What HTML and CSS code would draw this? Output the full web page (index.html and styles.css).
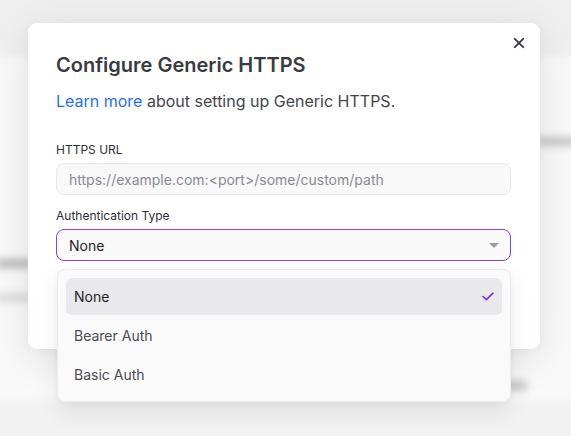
FILE: index.html
```html
<!DOCTYPE html>
<html lang="en">
<head>
<meta charset="utf-8">
<title>Configure Generic HTTPS</title>
<link rel="stylesheet" href="styles.css">
</head>
<body>
<div class="backdrop" aria-hidden="true">
  <div class="bg-header"></div>
  <div class="bg-row bg-row-a"><span class="bar bar-right"></span></div>
  <div class="bg-row bg-row-b"><span class="bar bar-left"></span></div>
  <div class="bg-row bg-row-c"><span class="bar bar-left-light"></span></div>
  <div class="bg-row bg-row-d"><span class="bar bar-bottom"></span></div>
  <div class="bg-footer"></div>
</div>

<div class="overlay">
  <div class="modal" role="dialog" aria-labelledby="modal-title">
    <button class="close" aria-label="Close">
      <svg width="12" height="12" viewBox="0 0 12 12"><path d="M1.8 1.8 L10.2 10.2 M10.2 1.8 L1.8 10.2" stroke="#3a3a44" stroke-width="1.9" stroke-linecap="round"/></svg>
    </button>
    <h1 id="modal-title" class="title">Configure Generic HTTPS</h1>
    <p class="intro"><a href="#" class="link">Learn more</a> about setting up Generic HTTPS.</p>

    <div class="field">
      <label class="label">HTTPS URL</label>
      <div class="input">https://example.com:&lt;port&gt;/some/custom/path</div>
    </div>

    <div class="field">
      <label class="label">Authentication Type</label>
      <div class="select">
        <span>None</span>
        <span class="caret"></span>
      </div>
      <div class="dropdown-wrap">
        <ul class="dropdown">
          <li class="option selected"><span>None</span>
            <svg width="12" height="9" viewBox="0 0 12 9"><path d="M1 4.5 L4.3 7.6 L11 1.2" fill="none" stroke="#7c2cf0" stroke-width="1.6" stroke-linecap="round" stroke-linejoin="round"/></svg>
          </li>
          <li class="option">Bearer Auth</li>
          <li class="option">Basic Auth</li>
        </ul>
      </div>
    </div>
  </div>
</div>
</body>
</html>
```

FILE: styles.css
```css
* { box-sizing: border-box; }

html, body {
  margin: 0;
  width: 571px;
  height: 436px;
  overflow: hidden;
}

body {
  background: #f6f6f6;
  font-family: "Inter", "Noto Sans", sans-serif;
  position: relative;
}

/* blurred page behind the dialog */
.backdrop {
  position: absolute;
  inset: -10px;
  display: flex;
  flex-direction: column;
  filter: blur(4px);
  background: #f9f9f9;
}
.bg-header { height: 66px; background: #efefef; }
.bg-row { display: flex; }
.bg-row-a { height: 90px; padding-top: 82px; justify-content: flex-end; }
.bg-row-b { height: 120px; padding-top: 114px; }
.bg-row-c { height: 36px; padding-top: 29px; }
.bg-row-d { height: 98px; padding-top: 80px; justify-content: flex-end; padding-right: 54px; }
.bg-footer { flex: 1; background: #f2f2f2; }
.bar { display: block; height: 7px; border-radius: 3px; }
.bar-right { width: 44px; background: #b8b8b8; }
.bar-left { width: 36px; background: #a6a6a6; margin-left: 6px; }
.bar-left-light { width: 36px; background: #c6c6c6; height: 5px; margin-left: 6px; }
.bar-bottom { width: 22px; background: #b4b4b4; }

.overlay {
  position: absolute;
  inset: 0;
  padding: 23px 0 0 28px;
}

.modal {
  position: relative;
  width: 512px;
  height: 326px;
  background: #ffffff;
  border-radius: 9px;
  padding: 27px 29px 0 28px;
  box-shadow: 0 10px 40px rgba(0, 0, 0, 0.10), 0 2px 8px rgba(0, 0, 0, 0.04);
}

.close {
  position: absolute;
  top: 14px;
  right: 15px;
  width: 12px;
  height: 12px;
  padding: 0;
  border: 0;
  background: none;
  display: flex;
}

.title {
  margin: 0;
  font-size: 20px;
  line-height: 30px;
  font-weight: 600;
  color: #3a3a42;
}

.intro {
  margin: 9px 0 0;
  font-size: 16px;
  line-height: 24px;
  color: #45454d;
}
.link { color: #1f6ff5; text-decoration: none; }

.field { margin-top: 29px; }
.field + .field { margin-top: 13px; }

.label {
  display: block;
  font-size: 12px;
  line-height: 16px;
  color: #2e2e35;
  margin-bottom: 5px;
}

.input {
  height: 32px;
  border: 1px solid #e8e8eb;
  border-radius: 8px;
  background: #f9f9fa;
  padding: 0 12px;
  display: flex;
  align-items: center;
  font-size: 14px;
  color: #8a8a94;
}

.select {
  height: 32px;
  border: 1.5px solid #8b3cf7;
  border-radius: 8px;
  background: #f9f9fa;
  padding: 0 11px 0 12px;
  display: flex;
  align-items: center;
  justify-content: space-between;
  font-size: 14px;
  color: #1f1f25;
}
.caret {
  width: 0;
  height: 0;
  border-left: 5px solid transparent;
  border-right: 5px solid transparent;
  border-top: 5px solid #9b9ba4;
  margin-top: 1px;
}

.dropdown-wrap { position: relative; }
.dropdown {
  position: absolute;
  top: 8px;
  left: 1px;
  right: 0;
  margin: 0;
  padding: 8px;
  list-style: none;
  background: #fafafa;
  border: 1px solid #ececee;
  border-radius: 8px;
  box-shadow: 0 10px 24px rgba(0, 0, 0, 0.08), 0 2px 6px rgba(0, 0, 0, 0.04);
  display: flex;
  flex-direction: column;
  gap: 2px;
}
.option {
  height: 37px;
  padding: 0 8px;
  border-radius: 6px;
  display: flex;
  align-items: center;
  justify-content: space-between;
  font-size: 14px;
  color: #4a4a52;
}
.option.selected {
  background: #e9e9ec;
  color: #1f1f25;
}
```
